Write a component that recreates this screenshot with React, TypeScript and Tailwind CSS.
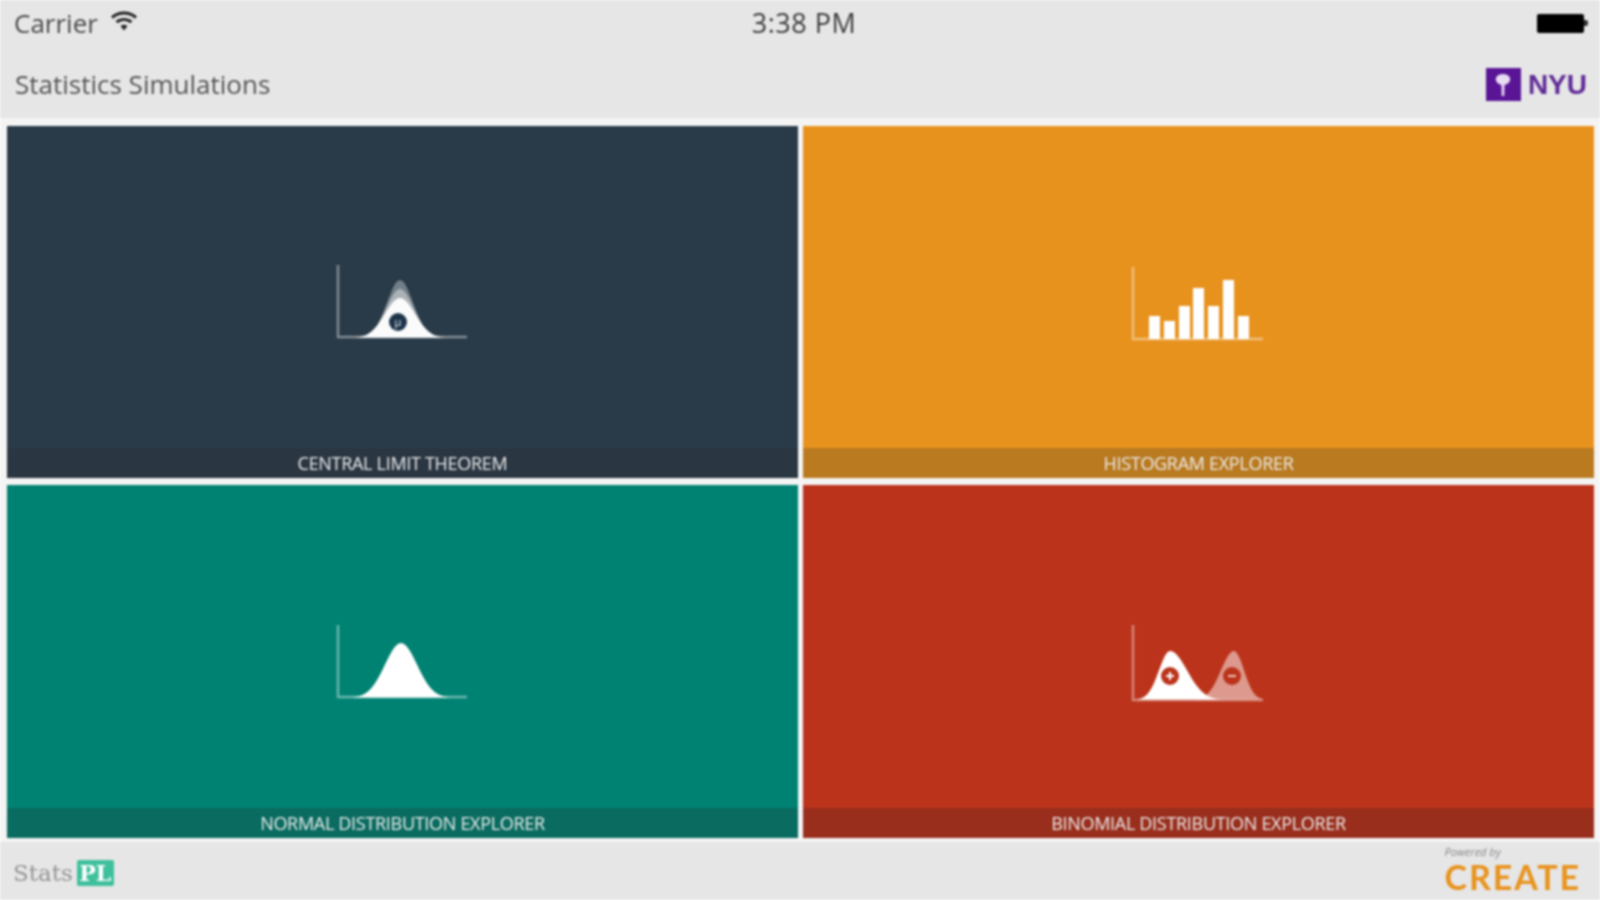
import type { ReactNode } from 'react';

// gaussian hump, with separate spread on each side of the peak
const hump = (peak: number, top: number, left: number, right: number, base = 73) => {
  const pts: string[] = [];
  for (let x = peak - 3 * left; x <= peak + 3 * right; x += 2) {
    const s = x < peak ? left : right;
    const y = base - (base - top) * Math.exp(-((x - peak) ** 2) / (2 * s * s));
    pts.push(`${x.toFixed(1)} ${y.toFixed(1)}`);
  }
  return `M${pts.join('L')}Z`;
};

function ChartFrame({ children, left = 1, top = 0, bottom = 72 }: { children: ReactNode; left?: number; top?: number; bottom?: number }) {
  return (
    <svg width="130" height="74" viewBox="0 0 130 74" className="block overflow-visible">
      <path d={`M${left} ${top}V${bottom}H129`} fill="none" stroke="#fff" strokeOpacity="0.42" strokeWidth="2.4" />
      {children}
    </svg>
  );
}

function CltIcon() {
  return (
    <ChartFrame left={0}>
      <path d={hump(62, 15, 13, 13)} fill="#fff" fillOpacity="0.35" />
      <path d={hump(62, 24, 14, 14)} fill="#fff" fillOpacity="0.4" />
      <path d={hump(62, 33, 15, 15)} fill="#fff" fillOpacity="0.95" />
      <circle cx="60" cy="57" r="9" fill="#1d3448" />
      <text x="60" y="61" textAnchor="middle" fontSize="11" fill="#dfe5ea" fontFamily="'Open Sans', sans-serif">μ</text>
    </ChartFrame>
  );
}

function HistogramIcon() {
  const bars = [
    [15, 51],
    [30, 56],
    [45, 41],
    [59, 23],
    [74, 41],
    [89, 15],
    [104, 51],
  ];
  return (
    <ChartFrame left={-1} top={2} bottom={74}>
      {bars.map(([x, y]) => (
        <rect key={x} x={x} y={y} width="11" height={74 - y} fill="#fff" />
      ))}
    </ChartFrame>
  );
}

function NormalIcon() {
  return (
    <ChartFrame left={0}>
      <path d={hump(63, 18, 16, 16)} fill="#fff" />
    </ChartFrame>
  );
}

function BinomialIcon() {
  return (
    <ChartFrame left={-1} bottom={75}>
      <path d={hump(100, 26, 13, 10, 75)} fill="#fff" fillOpacity="0.5" />
      <path d={hump(36, 26, 11, 17, 75)} fill="#fff" />
      <circle cx="36" cy="51" r="9" fill="#bb331b" />
      <path d="M32 51H40M36 47V55" stroke="#fff" strokeWidth="2" />
      <circle cx="98" cy="51" r="9" fill="#bb331b" />
      <path d="M94 51H102" stroke="#f0c4b8" strokeWidth="2" />
    </ChartFrame>
  );
}

const tiles = [
  { label: 'Central Limit Theorem', icon: <CltIcon />, bg: 'bg-[#293b48]', band: 'bg-[#2a3642]' },
  { label: 'Histogram Explorer', icon: <HistogramIcon />, bg: 'bg-[#e8921e]', band: 'bg-[#b97a20]' },
  { label: 'Normal Distribution Explorer', icon: <NormalIcon />, bg: 'bg-[#008272]', band: 'bg-[#0a6b60]' },
  { label: 'Binomial Distribution Explorer', icon: <BinomialIcon />, bg: 'bg-[#bb331b]', band: 'bg-[#992e1c]' },
];

export default function App() {
  return (
    <div className="h-screen w-full flex flex-col bg-[#e6e6e6] overflow-hidden blur-[0.8px] font-['Open_Sans',sans-serif]">
      <div className="h-[46px] flex items-center justify-between px-[14px] relative">
        <div className="flex items-center gap-[13px] text-[26px] text-[#4a4a4a]">
          <span>Carrier</span>
          <svg width="26" height="20" viewBox="0 0 26 20" className="-mt-[4px]">
            <path d="M1 6.500C8 .5 18 .5 25 6.500" fill="none" stroke="#222" strokeWidth="3" />
            <path d="M5.500 11C10 7.500 16 7.500 20.500 11" fill="none" stroke="#222" strokeWidth="3" />
            <path d="M9.500 15C11.500 13.400 14.500 13.400 16.500 15L13 19.500Z" fill="#222" />
          </svg>
        </div>
        <div className="absolute left-[8px] right-0 text-center text-[27px] tracking-[0.5px] text-[#3c3c3c]">3:38 PM</div>
        <div className="flex items-center mr-[-2px]">
          <div className="w-[47px] h-[19px] rounded-[2px] bg-black" />
          <div className="w-[4px] h-[6px] rounded-r-[2px] bg-[#333]" />
        </div>
      </div>

      <div className="h-[72px] pt-[5px] flex items-center justify-between pl-[15px] pr-[13px]">
        <div className="text-[26px] text-[#555555]">Statistics Simulations</div>
        <div className="flex items-center gap-[7px]">
          <div className="w-[35px] h-[33px] bg-[#5a1496] flex items-center justify-center">
            <svg width="20" height="26" viewBox="0 0 20 26">
              <path d="M10 2C5 2 2 5 3 8.500C4 11.500 7 12.500 8.500 13L8.700 24H11.300L11.500 13C13 12.500 16 11.500 17 8.500C18 5 15 2 10 2Z" fill="#e9ddf2" />
            </svg>
          </div>
          <span className="text-[28px] leading-none font-bold text-[#5f2a96] font-['Liberation_Sans',sans-serif]">NYU</span>
        </div>
      </div>

      <div className="grid grid-cols-2 grid-rows-[352px_353px] gap-x-[5px] gap-y-[7px] bg-[#f4f4f4] pl-[7px] pr-[6px] pt-[8px] pb-[4px]">
        {tiles.map((t) => (
          <div key={t.label} className={`flex flex-col ${t.bg}`}>
            <div className="flex-1 flex items-center justify-center pt-[30px]">{t.icon}</div>
            <div className={`h-[30px] flex items-center justify-center text-[18px] uppercase tracking-[-0.3px] text-[#ececec] ${t.band}`}>
              {t.label}
            </div>
          </div>
        ))}
      </div>

      <div className="flex-1 flex items-center justify-between pl-[13px] pr-[19px] pb-[4px]">
        <div className="mt-[8px] flex items-center gap-[4px] font-['DejaVu_Serif',serif]">
          <span className="text-[23px] text-[#949494]">Stats</span>
          <span className="h-[26px] w-[37px] flex items-center justify-center rounded-[2px] bg-[#3fc09c] text-[22px] font-bold text-white">PL</span>
        </div>
        <div className="flex flex-col">
          <span className="mb-[4px] text-[11px] leading-[12px] italic text-[#8a8a8a]">Powered by</span>
          <span className="text-[34px] leading-[30px] font-bold text-[#e8931e] font-['Lato',sans-serif] tracking-[1.9px]">CREATE</span>
        </div>
      </div>
    </div>
  );
}
